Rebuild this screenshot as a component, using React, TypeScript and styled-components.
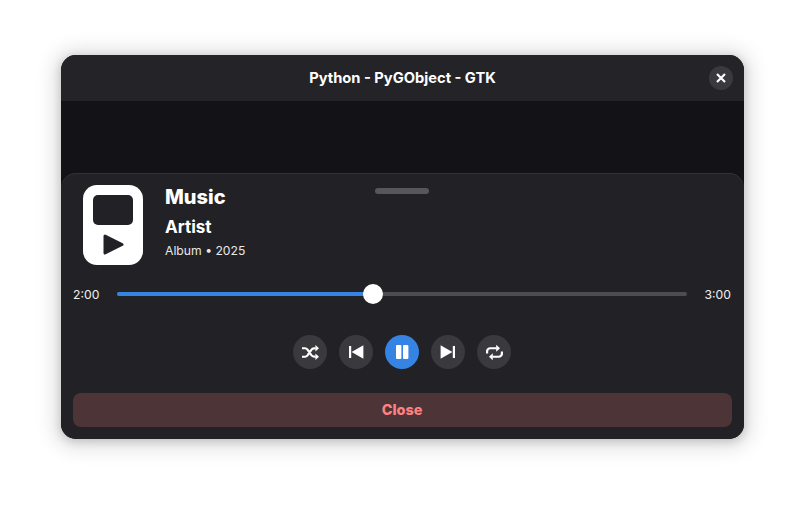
import React from 'react';
import styled, { createGlobalStyle } from 'styled-components';

const GlobalStyle = createGlobalStyle`
  html, body {
    margin: 0;
    background: #fff;
    font-family: Inter, "Noto Sans", sans-serif;
  }
  * { box-sizing: border-box; }
`;

const Page = styled.div`
  width: 805px;
  height: 506px;
  padding: 55px 61px 67px 61px;
`;

const Window = styled.div`
  width: 683px;
  height: 384px;
  display: flex;
  flex-direction: column;
  border-radius: 15px;
  overflow: hidden;
  background: #131317;
  box-shadow: 0 2px 8px 1px rgba(0, 0, 0, 0.16), 0 2px 18px 9px rgba(0, 0, 0, 0.1);
`;

const TitleBar = styled.header`
  height: 46px;
  flex: none;
  display: flex;
  align-items: center;
  justify-content: center;
  padding-bottom: 1px;
  position: relative;
  background: #242428;
  color: #fff;
  font-size: 14.7px;
  font-weight: 700;
`;

const WindowClose = styled.button`
  position: absolute;
  top: 11px;
  right: 11px;
  width: 24px;
  height: 24px;
  padding: 0;
  border: 0;
  border-radius: 50%;
  display: flex;
  align-items: center;
  justify-content: center;
  background: #3a3a3e;
`;

const Backdrop = styled.div`
  flex: 1;
  display: flex;
  padding-top: 72px;
`;

const Sheet = styled.section`
  flex: 1;
  position: relative;
  display: flex;
  flex-direction: column;
  padding: 12px;
  border-radius: 15px 15px 0 0;
  background: #222226;
  box-shadow: inset 0 1px 0 #323236;
  color: #fff;
`;

const Handle = styled.div`
  position: absolute;
  top: 15px;
  left: 314px;
  width: 54px;
  height: 6px;
  border-radius: 3px;
  background: #57575a;
`;

const Header = styled.div`
  display: flex;
  align-items: flex-start;
  gap: 22px;
  padding-left: 10px;
`;

const Cover = styled.div`
  width: 60px;
  height: 80px;
  flex: none;
  display: flex;
  flex-direction: column;
  align-items: center;
  padding-top: 10px;
  border-radius: 14px;
  background: #fff;
`;

const CoverScreen = styled.div`
  width: 40px;
  height: 30px;
  border-radius: 5px;
  background: #222226;
  margin-bottom: 9px;
`;

const Meta = styled.div`
  display: flex;
  flex-direction: column;
`;

const Title = styled.div`
  font-size: 20px;
  font-weight: 800;
  line-height: 24px;
`;

const Artist = styled.div`
  font-size: 17px;
  font-weight: 700;
  line-height: 22px;
  margin-top: 7px;
`;

const Album = styled.div`
  font-size: 12.2px;
  line-height: 16px;
  margin-top: 5px;
  color: #e8e8e9;
`;

const Progress = styled.div`
  display: flex;
  align-items: center;
  margin: 20px 1px 0 0;
  height: 18px;
  color: #f0f0f0;
  font-size: 12.2px;
`;

const Time = styled.span<{ $align: 'left' | 'right' }>`
  width: 44px;
  text-align: ${p => p.$align};
`;

const Track = styled.div`
  flex: 1;
  height: 4px;
  border-radius: 2px;
  background: #4d4d50;
  position: relative;
`;

const Fill = styled.div`
  height: 100%;
  border-radius: 2px;
  background: #3584e4;
`;

const Thumb = styled.div`
  position: absolute;
  top: -8px;
  width: 20px;
  height: 20px;
  margin-left: -10px;
  border-radius: 50%;
  background: #fff;
`;

const Controls = styled.div`
  display: flex;
  justify-content: center;
  gap: 12px;
  margin: 32px 1px 0 0;
`;

const RoundButton = styled.button<{ $accent?: boolean }>`
  width: 34px;
  height: 34px;
  padding: 0;
  border: 0;
  border-radius: 50%;
  display: flex;
  align-items: center;
  justify-content: center;
  background: ${p => (p.$accent ? '#3584e4' : '#3a3a3e')};
`;

const CloseButton = styled.button`
  height: 34px;
  margin-top: 24px;
  padding: 0 1px 2px 0;
  border: 0;
  border-radius: 8px;
  background: #4d3436;
  color: #ff8080;
  font-family: inherit;
  font-size: 14.4px;
  font-weight: 800;
`;

const Glyph = ({ size = 16, children }: { size?: number; children: React.ReactNode }) => (
  <svg width={size} height={size} viewBox="0 0 16 16" fill="none">
    {children}
  </svg>
);

const ShuffleIcon = () => (
  <Glyph size={17}>
    <path d="M0 4h2.8c1 0 1.8.5 2.4 1.3l3.6 5.2c.6.8 1.4 1.3 2.4 1.3h1.6M0 12h2.8c1 0 1.8-.5 2.4-1.3l3.6-5.2c.6-.8 1.4-1.3 2.4-1.3h1.6" stroke="#fff" strokeWidth="2.1" />
    <path d="M12.6 1l3.4 3-3.4 3zM12.6 9l3.4 3-3.4 3z" fill="#fff" />
  </Glyph>
);

const PrevIcon = () => (
  <Glyph>
    <rect x="1" y="2" width="2.2" height="12" fill="#fff" />
    <path d="M15.4 1.2v13.6L3.6 8z" fill="#fff" />
  </Glyph>
);

const NextIcon = () => (
  <Glyph>
    <rect x="12.8" y="2" width="2.2" height="12" fill="#fff" />
    <path d="M.6 1.2v13.6L12.4 8z" fill="#fff" />
  </Glyph>
);

const PauseIcon = () => (
  <Glyph>
    <rect x="2" y="1" width="5.4" height="14" rx="1" fill="#fff" />
    <rect x="9" y="1" width="5.4" height="14" rx="1" fill="#fff" />
  </Glyph>
);

const RepeatIcon = () => (
  <Glyph size={17}>
    <path d="M10 4H4A3 3 0 0 0 1 7v2M6 12h6a3 3 0 0 0 3-3V7" stroke="#fff" strokeWidth="2.1" />
    <path d="M9.6 .8L13.2 4l-3.6 3.2zM6.4 8.8L2.8 12l3.6 3.2z" fill="#fff" />
  </Glyph>
);

const App = () => (
  <Page>
    <GlobalStyle />
    <Window>
      <TitleBar>
        Python - PyGObject - GTK
        <WindowClose aria-label="Close window">
          <svg width="10" height="10" viewBox="0 0 10 10">
            <path d="M1 1l8 8M9 1l-8 8" stroke="#fff" strokeWidth="2.2" />
          </svg>
        </WindowClose>
      </TitleBar>
      <Backdrop>
        <Sheet>
          <Handle />
          <Header>
            <Cover>
              <CoverScreen />
              <svg width="21" height="21" viewBox="0 0 21 21">
                <path d="M2 2l17 8.5L2 19z" fill="#222226" stroke="#222226" strokeWidth="3" strokeLinejoin="round" />
              </svg>
            </Cover>
            <Meta>
              <Title>Music</Title>
              <Artist>Artist</Artist>
              <Album>Album • 2025</Album>
            </Meta>
          </Header>
          <Progress>
            <Time $align="left">2:00</Time>
            <Track>
              <Fill style={{ width: '44.9%' }} />
              <Thumb style={{ left: '44.9%' }} />
            </Track>
            <Time $align="right">3:00</Time>
          </Progress>
          <Controls>
            <RoundButton aria-label="Shuffle"><ShuffleIcon /></RoundButton>
            <RoundButton aria-label="Previous"><PrevIcon /></RoundButton>
            <RoundButton $accent aria-label="Pause"><PauseIcon /></RoundButton>
            <RoundButton aria-label="Next"><NextIcon /></RoundButton>
            <RoundButton aria-label="Repeat"><RepeatIcon /></RoundButton>
          </Controls>
          <CloseButton>Close</CloseButton>
        </Sheet>
      </Backdrop>
    </Window>
  </Page>
);

export default App;
